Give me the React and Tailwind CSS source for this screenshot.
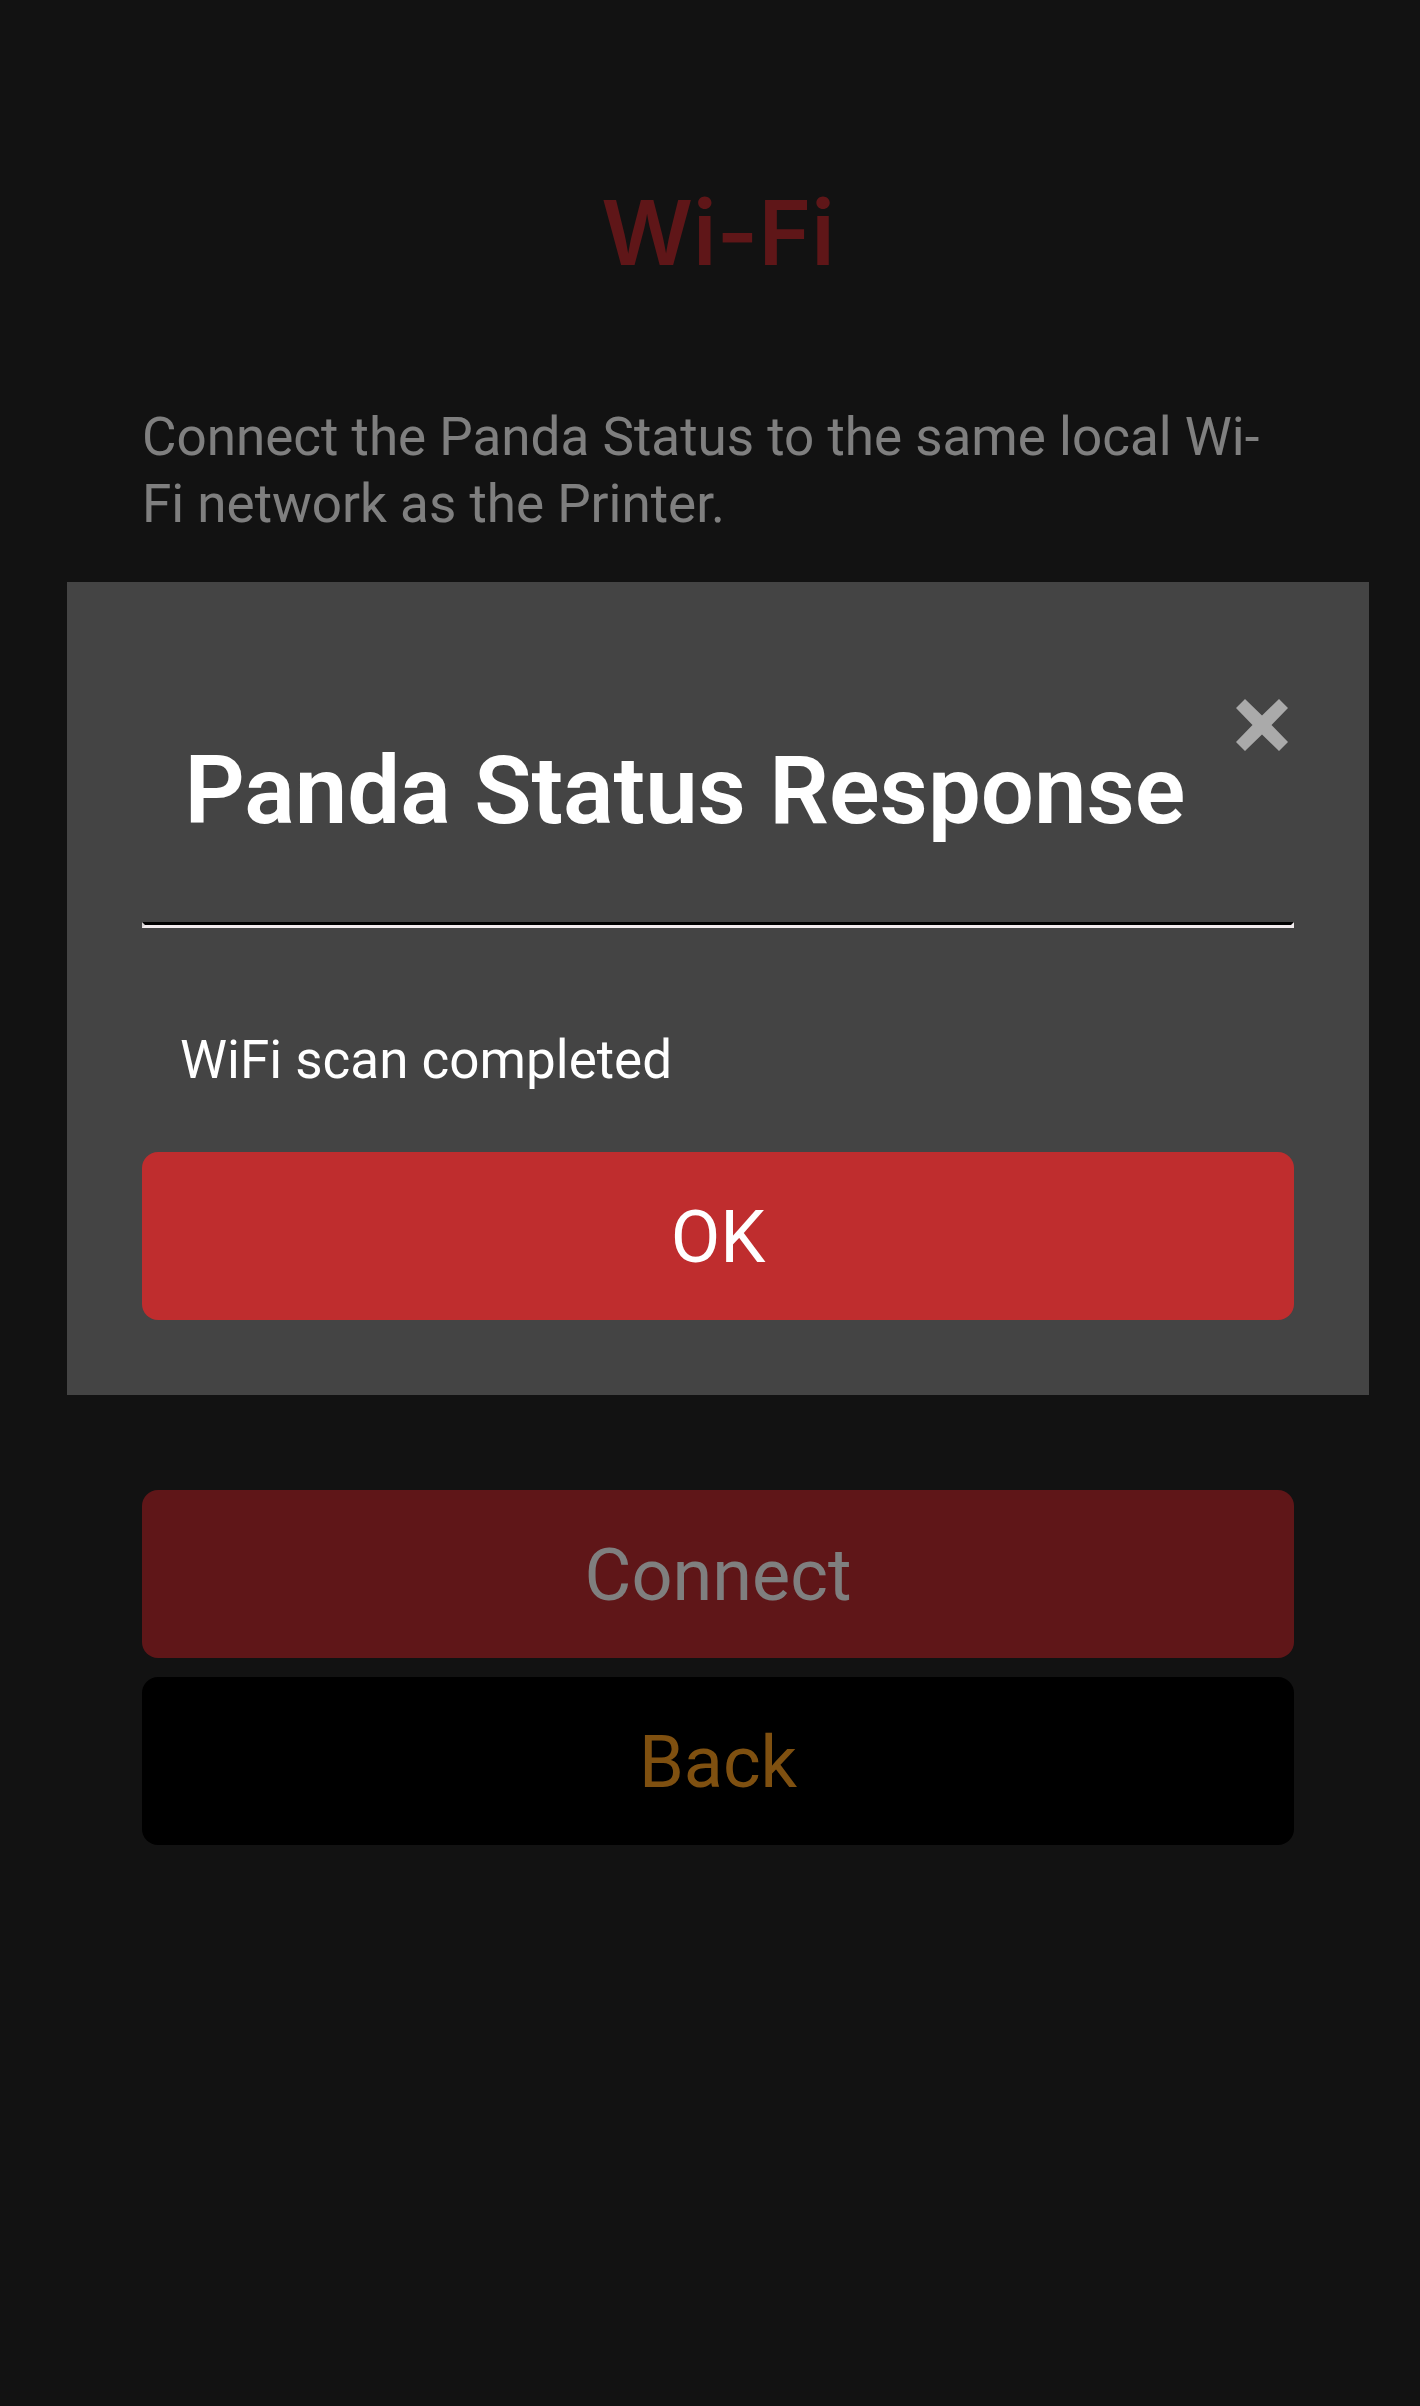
import React, { useState } from "react";

const buttonBase = "block h-[168px] w-full rounded-[16px] pt-1 text-center text-[72px] leading-[84px]";

function CloseIcon() {
  return (
    <svg viewBox="0 0 52 52" className="size-[52px]" fill="currentColor" aria-hidden="true">
      <path d="M9 0 L26 16.5 L43 0 L52 9 L35.5 26 L52 43 L43 52 L26 35.5 L9 52 L0 43 L16.5 26 L0 9 Z" />
    </svg>
  );
}

function ResponseDialog({ title, message, onClose }) {
  return (
    <div className="fixed inset-0 bg-black/50 pt-[582px] pr-[51px] pl-[67px]">
      <section
        role="dialog"
        aria-modal="true"
        aria-labelledby="dialog-title"
        className="bg-[#444444] p-[75px] text-white"
      >
        <header className="flex items-start pt-[42px]">
          <h2
            id="dialog-title"
            className="flex-1 pt-8 text-center text-[94px] leading-[120px] font-semibold"
          >
            {title}
          </h2>
          <button type="button" aria-label="Close" onClick={onClose} className="pr-[6px] pl-2 text-[#aaaaaa]">
            <CloseIcon />
          </button>
        </header>
        <hr className="mt-[71px] h-[6px] border-3 border-t-black border-r-[#f2ecee] border-b-[#f2ecee] border-l-[#d8d4d5]" />
        <p className="mt-[99px] px-[38px] text-[53px] leading-[67px]">{message}</p>
        <button type="button" onClick={onClose} className={`${buttonBase} mt-[58px] bg-[#bf2d2e]`}>
          OK
        </button>
      </section>
    </div>
  );
}

export default function App() {
  const [open, setOpen] = useState(true);

  return (
    <div className="min-h-screen bg-[#242424] font-['Roboto',sans-serif]">
      <main className="pt-[173px] pr-[126px] pb-24 pl-[142px]">
        <h1 className="text-center font-['Inter',sans-serif] text-[90px] leading-[120px] font-semibold text-[#be2c30]">
          Wi-Fi
        </h1>
        <p className="mt-[111px] text-[53px] leading-[67px] text-white">
          Connect the Panda Status to the same local Wi-Fi network as the Printer.
        </p>
        <div className="mt-[952px] flex flex-col gap-[19px]">
          <button type="button" className={`${buttonBase} bg-[#be2c30] text-white`}>
            Connect
          </button>
          <button type="button" className={`${buttonBase} bg-black text-[#ffa020]`}>
            Back
          </button>
        </div>
      </main>
      {open && (
        <ResponseDialog
          title="Panda Status Response"
          message="WiFi scan completed"
          onClose={() => setOpen(false)}
        />
      )}
    </div>
  );
}
